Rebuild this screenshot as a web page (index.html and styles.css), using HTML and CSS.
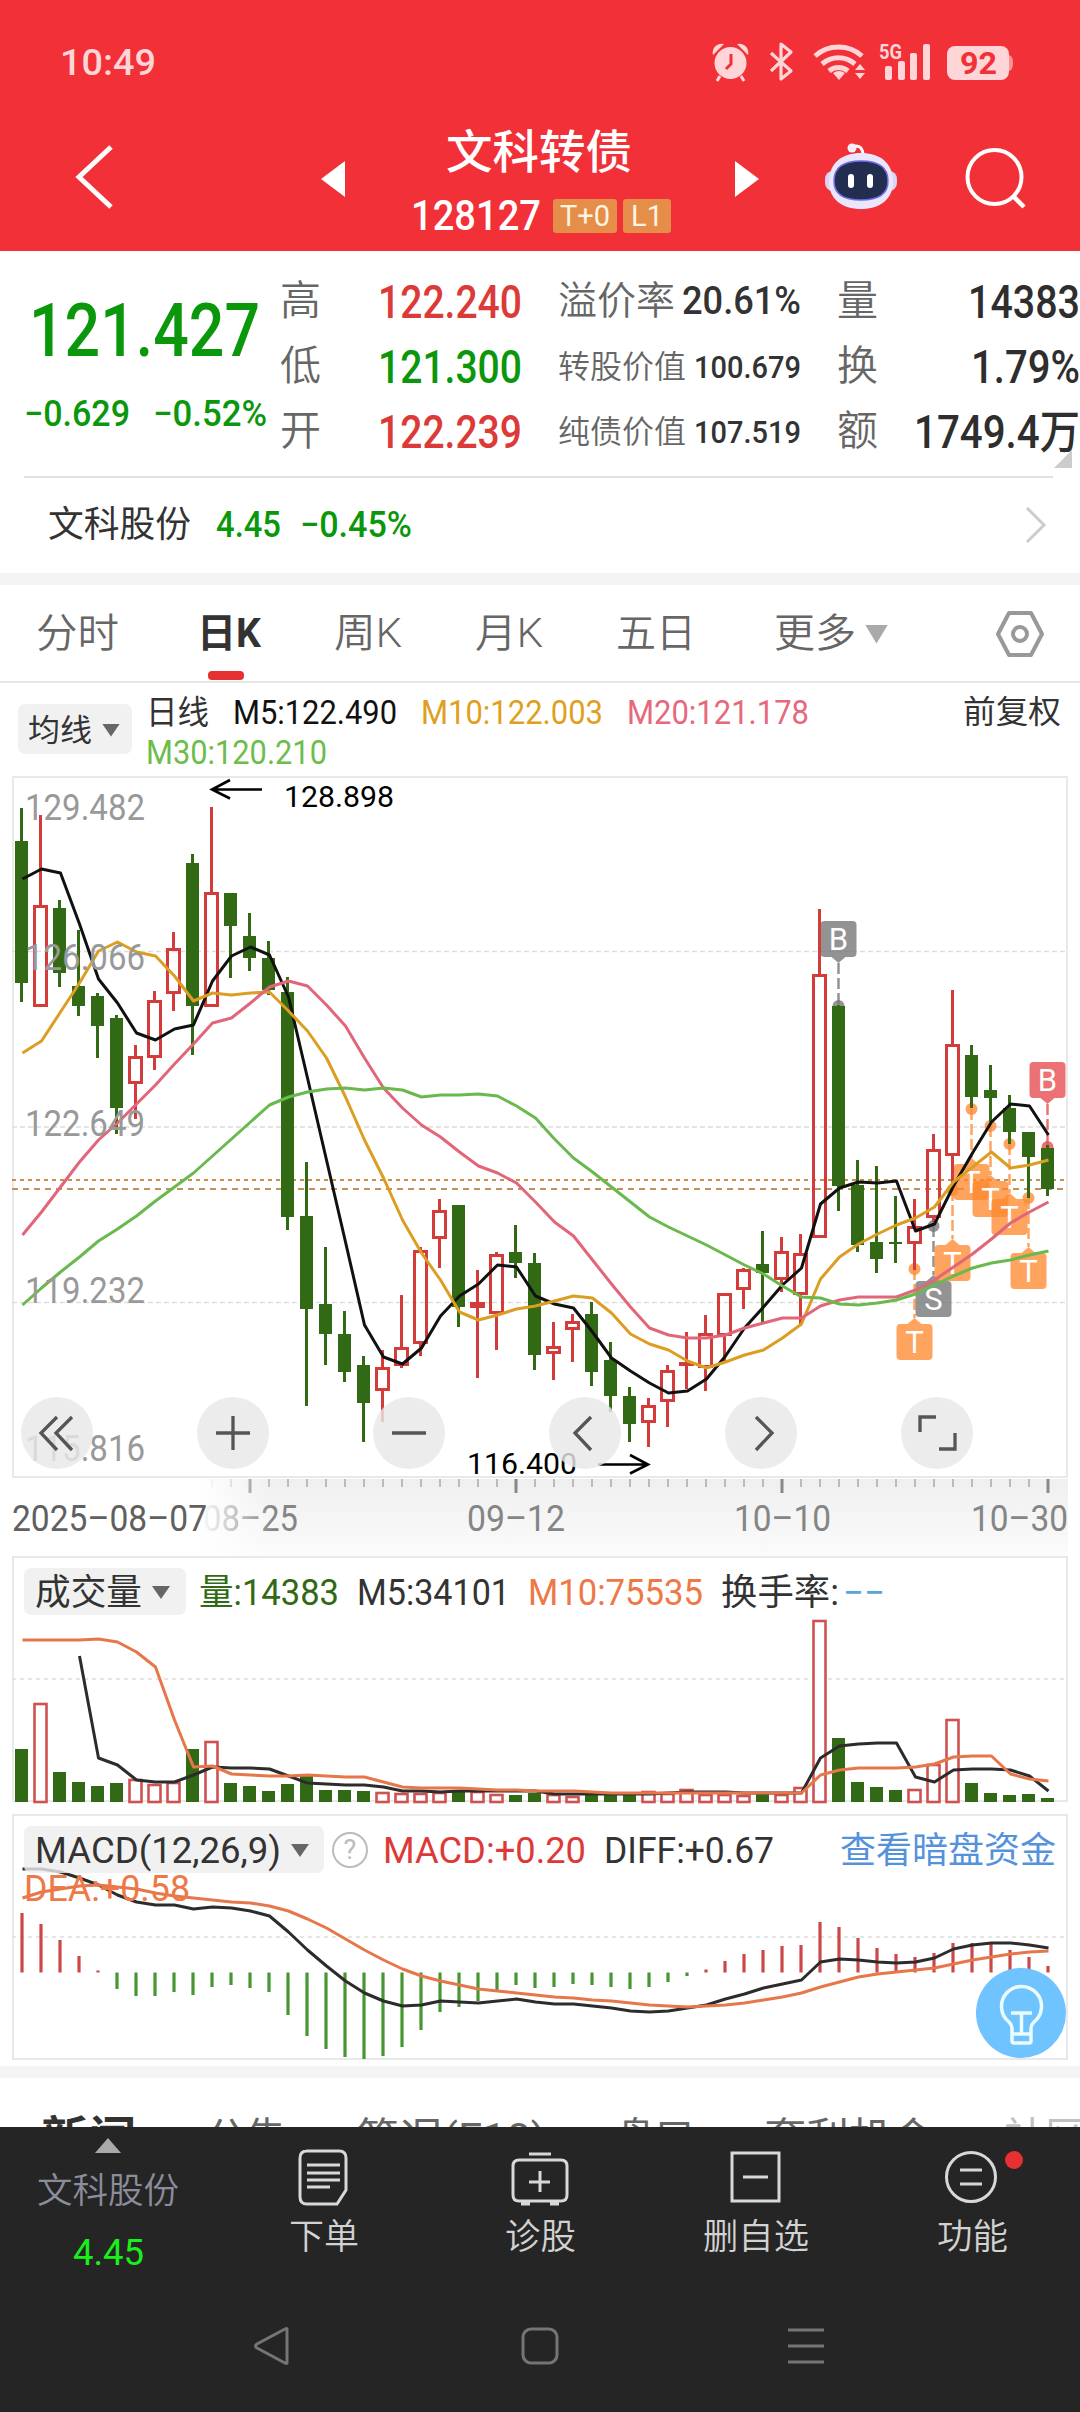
FILE: index.html
```html
<!DOCTYPE html>
<html lang="zh-CN">
<head>
    <meta charset="UTF-8">
    <meta name="viewport" content="width=device-width, initial-scale=1.0">
    <title>文科转债 128127</title>
    <link rel="stylesheet" href="styles.css">
</head>
<body>

    <header class="header">
        <div class="status">
            <span class="clock" data-w="96">10:49</span>
            <svg class="status-icons" width="310" height="50" viewBox="708 38 310 50">
                <g fill="#ffd5d7">
                    <circle cx="730.500" cy="63" r="16"/>
                    <path d="M713 55a9 9 0 0 1 11-11zM748 55a9 9 0 0 0-11-11z"/>
                    <path d="M720 76l-3 5M741 76l3 5" stroke="#ffd5d7" stroke-width="3"/>
                    <path d="M731 54v10l-5 5" fill="none" stroke="#f13037" stroke-width="3"/>
                    <path d="M771 53l20 18-10 8V44l10 8-20 19" fill="none" stroke="#ffd5d7" stroke-width="3.200" stroke-linejoin="round"/>
                    <path d="M815 56a35 35 0 0 1 47 0" fill="none" stroke="#ffd5d7" stroke-width="5"/>
                    <path d="M822 64a25 25 0 0 1 33 0" fill="none" stroke="#ffd5d7" stroke-width="5"/>
                    <path d="M829 71a15 15 0 0 1 19 0" fill="none" stroke="#ffd5d7" stroke-width="5"/>
                    <path d="M839 80l-6-7q6-4 12 0zM855 70l5-6 5 6zM855 73l5 6 5-6z"/>
                    <text x="879" y="59" class="net" textLength="23" lengthAdjust="spacingAndGlyphs">5G</text>
                    <rect x="885" y="66" width="7" height="14" rx="2"/>
                    <rect x="898" y="61" width="7" height="19" rx="2"/>
                    <rect x="910" y="53" width="7" height="27" rx="2"/>
                    <rect x="923" y="44" width="7" height="36" rx="2"/>
                    <rect x="947" y="46" width="62" height="34" rx="8"/>
                    <path d="M1009 55q4 1 4 8t-4 8z" opacity=".6"/>
                    <text x="960" y="74" class="battery" textLength="37" lengthAdjust="spacingAndGlyphs">92</text>
                </g>
            </svg>
        </div>
        <div class="toolbar">
            <svg class="back" width="44" height="70" viewBox="0 0 44 70"><path d="M38 5L6 35l32 30" fill="none" stroke="#fff" stroke-width="5"/></svg>
            <svg class="prev" width="24" height="36" viewBox="0 0 24 36"><path d="M24 0v36L0 18z" fill="#fff"/></svg>
            <div class="title">
                <h1><span data-w="186">文科转债</span></h1>
                <div class="code">
                    <span class="code-num" data-w="130">128127</span>
                    <span class="tag tag-t0">T+0</span>
                    <span class="tag tag-l1">L1</span>
                </div>
            </div>
            <svg class="next" width="24" height="36" viewBox="0 0 24 36"><path d="M0 0v36l24-18z" fill="#fff"/></svg>
            <svg class="robot" width="74" height="68" viewBox="823 142 74 68">
                <path d="M850 147q12-4 13 7" fill="none" stroke="#fff" stroke-width="3"/>
                <circle cx="852" cy="148" r="4.500" fill="#f3effc"/>
                <rect x="825" y="171" width="72" height="20" rx="8" fill="#dcd4f6"/>
                <path d="M829 182c0-20 14-29 32-29s32 9 32 29c0 17-13 27-32 27s-32-10-32-27z" fill="#ebe6fb"/>
                <path d="M834 181c0-14 9-20 27-20s27 6 27 20c0 13-9 19-27 19s-27-6-27-19z" fill="#222d50" stroke="#6f6ce8" stroke-width="1.500"/>
                <rect x="848" y="174" width="6" height="14" rx="3" fill="#fff"/>
                <rect x="867" y="174" width="6" height="14" rx="3" fill="#fff"/>
            </svg>
            <svg class="search" width="64" height="64" viewBox="963 146 64 64">
                <circle cx="994.500" cy="177" r="27" fill="none" stroke="#fff" stroke-width="4"/>
                <path d="M1013 196l11 11" stroke="#fff" stroke-width="4.500"/>
            </svg>
        </div>
    </header>

    <section class="quote">
        <div class="last down">
            <div class="price"><span data-w="231">121.427</span></div>
            <div class="change"><span data-w="106">−0.629</span><span data-w="114">−0.52%</span></div>
        </div>
        <dl class="stats">
            <dt>高</dt><dd class="up"><span data-w="144">122.240</span></dd>
            <dt class="mid">溢价率</dt><dd class="mid-v"><span data-w="119">20.61%</span></dd>
            <dt>量</dt><dd class="end"><span data-w="112">14383</span></dd>

            <dt>低</dt><dd class="down"><span data-w="144">121.300</span></dd>
            <dt class="small">转股价值</dt><dd class="small-v"><span data-w="107">100.679</span></dd>
            <dt>换</dt><dd class="end"><span data-w="109">1.79%</span></dd>

            <dt>开</dt><dd class="up"><span data-w="144">122.239</span></dd>
            <dt class="small">纯债价值</dt><dd class="small-v"><span data-w="107">107.519</span></dd>
            <dt>额</dt><dd class="end"><span data-w="166">1749.4万</span></dd>
        </dl>
        <i class="corner"></i>
    </section>

    <section class="related">
        <span class="related-name" data-w="143">文科股份</span>
        <span class="down" data-w="65">4.45</span>
        <span class="down" data-w="112">−0.45%</span>
        <svg width="24" height="40" viewBox="0 0 24 40"><path d="M3 3l17 17L3 37" fill="none" stroke="#ccc" stroke-width="3"/></svg>
    </section>

    <nav class="tabs">
        <span class="tab" data-w="83">分时</span>
        <span class="tab active"><span data-w="64">日K</span></span>
        <span class="tab" data-w="68">周K</span>
        <span class="tab" data-w="68">月K</span>
        <span class="tab" data-w="80">五日</span>
        <span data-w="82">更多</span>
        <i class="tri tri-light"></i>
        <svg width="50" height="48" viewBox="0 0 50 48"><path d="M14 3h22l11 21-11 21H14L3 24z" fill="none" stroke="#999" stroke-width="4" stroke-linejoin="round"/><circle cx="25" cy="24" r="7" fill="none" stroke="#999" stroke-width="4"/></svg>
    </nav>

    <div class="legend">
        <span class="picker"><span data-w="64">均线</span><i class="tri"></i></span>
        <div class="ma-list">
            <span class="dark" data-w="63">日线</span>
            <span class="ma5" data-w="164">M5:122.490</span>
            <span class="ma10" data-w="182">M10:122.003</span>
            <span class="ma20" data-w="182">M20:121.178</span>
            <span class="ma30" data-w="181">M30:120.210</span>
        </div>
        <span class="adjust" data-w="98">前复权</span>
    </div>

    <svg id="kline" class="chart" width="1080" height="780" viewBox="0 776 1080 780"></svg>

    <div class="panel">
        <svg id="volume" class="chart" width="1080" height="258" viewBox="0 1556 1080 258"></svg>
        <div class="panel-head">
            <span class="picker"><span data-w="107">成交量</span><i class="tri"></i></span>
            <span class="vol" data-w="140">量:14383</span>
            <span class="dark" data-w="153">M5:34101</span>
            <span class="orange" data-w="175">M10:75535</span>
            <span class="dark" data-w="118">换手率:</span>
            <span class="blank" data-w="42">−−</span>
        </div>
    </div>

    <div class="panel panel-macd">
        <svg id="macd" class="chart" width="1080" height="252" viewBox="0 1814 1080 252"></svg>
        <div class="panel-head">
            <span class="picker picker-macd"><span data-w="246">MACD(12,26,9)</span><i class="tri"></i></span>
            <span class="help">?</span>
            <span class="up" data-w="203">MACD:+0.20</span>
            <span class="dark" data-w="170">DIFF:+0.67</span>
            <a class="link" data-w="216">查看暗盘资金</a>
            <span class="dea" data-w="166">DEA:+0.58</span>
        </div>
        <svg class="tip" width="90" height="90" viewBox="0 0 90 90">
            <circle cx="45" cy="45" r="45" fill="#6fc3ff"/>
            <g fill="none" stroke="#eafcff" stroke-width="3.500">
                <path d="M36 73V60q0-3-3-6a20 20 0 1 1 25 0q-3 3-3 6v13q0 2-2 2H38q-2 0-2-2zM36 66h19"/>
                <path d="M35 45h21M45.500 45v21"/>
            </g>
        </svg>
    </div>

    <nav class="news">
        <span class="active" data-w="95">新闻</span>
        <span data-w="80">公告</span>
        <span data-w="190">简况(F10)</span>
        <span data-w="78">盘口</span>
        <span data-w="170">套利机会</span>
        <span class="faded" data-w="82">社区</span>
    </nav>

    <footer class="bottom">
        <div class="actions">
            <div class="action stock">
                <i class="tri-up"></i>
                <span class="stock-name" data-w="142">文科股份</span>
                <span class="stock-price" data-w="71">4.45</span>
            </div>
            <div class="action">
                <svg width="60" height="60" viewBox="0 0 60 60"><path d="M12 4h33q7 0 7 7v32L43 57H13q-7 0-7-7V11q0-7 7-7zM13 18h33M13 26h33M13 33h33M13 40h23"/></svg>
                <span data-w="70">下单</span>
            </div>
            <div class="action">
                <svg width="60" height="60" viewBox="0 0 60 60"><path d="M19 7h22M9 13h42q6 0 6 6v29q0 6-6 6H9q-6 0-6-6V19q0-6 6-6zM11 57h9M40 57h9M30 24v21M19 35h21"/></svg>
                <span data-w="71">诊股</span>
            </div>
            <div class="action">
                <svg width="60" height="60" viewBox="0 0 60 60"><path d="M6 6h47v48H6zM17 30h25"/></svg>
                <span data-w="106">删自选</span>
            </div>
            <div class="action">
                <svg width="60" height="60" viewBox="0 0 60 60"><circle cx="29" cy="30" r="24.500"/><path d="M18 23h22M18 37h22"/></svg>
                <i class="dot"></i>
                <span data-w="71">功能</span>
            </div>
        </div>
        <div class="system">
            <svg width="40" height="40" viewBox="0 0 40 40"><path d="M35 3v34q0 1-2 0L5 22q-3-2 0-4L33 3q2-1 2 0z"/></svg>
            <svg width="40" height="40" viewBox="0 0 40 40"><rect x="3" y="3" width="34" height="34" rx="8"/></svg>
            <svg width="40" height="40" viewBox="0 0 40 40"><path d="M2 4h36M2 20h36M2 36h36"/></svg>
        </div>
    </footer>

    <script src="chart.js"></script>
</body>
</html>
```
FILE: styles.css
```css
* { box-sizing: border-box; }
body {
    margin: 0;
    width: 1080px;
    height: 2412px;
    overflow: hidden;
    background: #fff;
    color: #333;
    font-family: Roboto, "Noto Sans CJK SC", sans-serif;
    line-height: 1;
}
svg { display: block; flex: none; }
i { flex: none; }
[data-w] { display: inline-block; white-space: nowrap; transform-origin: 0 50%; flex: none; }

.up { color: #dc3a38; }
.down { color: #0b970b; }
.dark { color: #333; }
.orange { color: #ee7846; }

/* header */
.header { height: 251px; background: #f13037; color: #fff; }
.status { height: 124px; display: flex; justify-content: space-between; padding: 38px 62px 0 60px; }
.clock { font-size: 37px; line-height: 49px; font-weight: 500; color: #ffd5d7; }
.net { font-size: 20px; font-weight: 700; }
.battery { font-size: 31px; font-weight: 700; fill: #f13037; }
.toolbar { display: flex; height: 127px; padding-left: 73px; }
.back { margin-top: 18px; }
.prev { margin: 37px 0 0 204px; }
.next { margin: 37px 0 0 60px; }
.robot { margin: 18px 0 0 64px; }
.search { margin: 22px 0 0 66px; }
.title { width: 330px; flex: none; }
h1 { margin: 3px 0 0 59px; font-size: 46px; line-height: 50px; font-weight: 500; padding-left: 42px; }
.code { display: flex; align-items: center; height: 40px; margin-top: 19px; padding-left: 66px; }
.code-num { font-size: 42px; font-weight: 500; }
.tag { height: 34px; line-height: 35px; margin-left: 12px; background: #e48e4a; border-radius: 3px; font-size: 29px; color: #fff3e2; text-align: center; }
.tag-t0 { width: 64px; }
.tag-l1 { width: 48px; margin-left: 6px; }

/* quote */
.quote { display: flex; height: 225px; position: relative; }
.last { width: 280px; padding: 42px 0 0 29px; flex: none; }
.price { font-size: 75px; font-weight: 500; height: 76px; }
.change { display: flex; gap: 23px; margin: 27px 0 0 -5px; font-size: 36px; font-weight: 500; }
.stats {
    margin: 18px 0 0;
    width: 800px;
    display: grid;
    grid-template-columns: 98px 180px 124px 155px 42px 1fr;
    grid-auto-rows: 65px;
    align-items: center;
    font-size: 41px;
}
.stats dt { color: #666; font-weight: 350; white-space: nowrap; }
.stats dd { margin: 0; font-size: 46px; font-weight: 500; }
.stats .mid, .stats .mid-v { font-size: 39px; }
.stats .small { font-size: 32px; }
.stats .small-v { font-size: 32px; padding-left: 12px; }
.stats .end { text-align: right; color: #2e2e2e; }
.corner { position: absolute; right: 8px; bottom: 8px; width: 18px; height: 18px; background: #ccc; clip-path: polygon(100% 0, 100% 100%, 0 100%); }

.related {
    display: flex;
    align-items: center;
    height: 109px;
    padding: 0 32px 0 48px;
    border-bottom: 12px solid #f4f4f4;
    font-size: 36px;
    font-weight: 500;
    background: linear-gradient(#e2e2e2, #e2e2e2) 24px 0 / 1029px 2px no-repeat;
}
.related-name { font-weight: 400; margin-right: 25px; }
.related .down { margin-right: 19px; }
.related svg { margin-left: auto; }

/* period tabs */
.tabs { display: flex; align-items: center; height: 98px; padding: 2px 0 0 36px; border-bottom: 2px solid #e6e6e6; font-size: 40px; font-weight: 350; color: #666; }
.tab { margin-right: 73px; }
.tab:first-child, .tab:nth-child(5) { margin-right: 78px; }
.tabs .active { position: relative; font-weight: 700; color: #333; }
.tabs .active::after { content: ""; position: absolute; left: 11px; top: 57px; width: 36px; height: 9px; border-radius: 4px; background: #e73031; }
.tabs svg { margin-left: 107px; }
.tri { width: 18px; height: 13px; background: #666; clip-path: polygon(0 0, 100% 0, 50% 100%); margin-left: 10px; }
.tri-light { width: 23px; height: 19px; background: #aaa; margin-left: 9px; }

/* moving average legend */
.legend { display: flex; height: 93px; padding-left: 18px; }
.picker { display: flex; align-items: center; height: 50px; padding: 2px 12px 0 10px; background: #f1f1f1; border-radius: 7px; color: #333; }
.legend .picker { margin-top: 21px; width: 114px; font-size: 31px; }
.ma-list { display: flex; flex-wrap: wrap; column-gap: 24px; width: 770px; margin: 10px 0 0 14px; font-size: 33px; height: 80px; align-content: flex-start; line-height: 40px; font-weight: 450; }
.ma-list .dark { font-weight: 400; }
.ma5 { color: #111; }
.ma10 { color: #dfa021; }
.ma20 { color: #e7687c; }
.ma30 { color: #6cbd4c; }
.adjust { margin: 9px 0 0 47px; font-size: 32px; line-height: 40px; font-weight: 400; }

/* chart text */
.axis { font-size: 37px; fill: #999; }
.date { font-size: 37px; fill: #858585; }
.date-first { fill: #606060; }
.peak { font-size: 30px; fill: #000; }
.flag { font-size: 31px; fill: #fff; text-anchor: middle; }

/* indicator panels */
.panel { display: grid; height: 258px; }
.panel > * { grid-area: 1 / 1; }
.panel-macd { height: 264px; border-bottom: 12px solid #f4f4f4; }
.panel-head { display: flex; align-items: flex-start; flex-wrap: wrap; height: 100px; padding: 12px 0 0 24px; font-size: 36px; line-height: 50px; z-index: 1; }
.panel .picker { height: 47px; width: 162px; padding-left: 11px; margin-right: 13px; }
.panel-head > span { margin-right: 18px; }
.vol { color: #326915; }
.blank { color: #56a6dc; margin-left: -14px; }
.panel .picker-macd { width: 300px; margin-right: 8px; background: rgba(238, 238, 238, .8); }
.panel-head .help { width: 36px; height: 36px; margin: 6px 15px 0 0; border: 2px solid #bbb; border-radius: 50%; color: #bbb; font-size: 27px; line-height: 32px; text-align: center; }
.link { color: #5592dc; margin-left: 48px; }
.panel-head .dea { color: #ee7846; margin-top: -12px; }
.tip { align-self: end; margin: 0 0 8px 976px; z-index: 2; }

/* news tabs */
.news { display: flex; height: 49px; padding: 37px 0 0 41px; overflow: hidden; font-size: 41px; line-height: 46px; color: #666; }
.news span { margin-right: 70px; }
.news .active { font-size: 46px; font-weight: 700; color: #333; }
.news .faded { opacity: .4; margin: 0; }

/* bottom bar */
.bottom { height: 285px; background: #252525; color: #d2d2d2; }
.actions { display: grid; grid-template-columns: repeat(5, 1fr); height: 183px; font-size: 35px; font-weight: 350; }
.action { display: flex; flex-direction: column; align-items: center; padding-top: 20px; position: relative; }
.action svg, .system svg { fill: none; stroke: #d8d8d8; stroke-width: 3; }
.action > span { margin-top: 13px; }
.action.stock { padding-top: 11px; }
.tri-up { width: 26px; height: 15px; background: #aaa; clip-path: polygon(50% 0, 100% 100%, 0 100%); }
.action .stock-name { margin-top: 21px; color: #8b8d9b; }
.action .stock-price { margin-top: 25px; color: #1bf01b; font-size: 37px; font-weight: 400; }
.dot { position: absolute; left: 141px; top: 24px; width: 18px; height: 18px; border-radius: 50%; background: #e73031; }
.system { display: flex; padding: 16px 0 0 252px; }
.system svg { stroke: #757575; margin-right: 228px; }
.system svg:nth-child(2) { margin-right: 226px; }
```
FILE: chart.js
```javascript
// x of every trading day
const X = i => 21.5 + i * 19;
const RED = '#d43c3c', GREEN = '#326915';

// [up?, high, body top, body bottom, low]
const candles = [
    [0,808,841,983,1002],[1,815,905,1007,1007],[0,900,908,973,987],[0,930,986,1006,1016],[0,993,996,1026,1058],
    [0,1015,1018,1108,1134],[1,1045,1056,1084,1119],[1,991,1000,1058,1070],[1,932,948,994,1011],[0,854,863,1006,1055],
    [1,807,892,1007,1007],[0,893,893,926,978],[0,913,936,958,971],[0,941,958,990,995],[0,977,992,1217,1230],
    [0,1162,1216,1309,1406],[0,1247,1304,1334,1365],[0,1311,1334,1372,1382],[0,1356,1365,1403,1442],[1,1350,1367,1391,1422],
    [1,1295,1347,1366,1368],[1,1247,1250,1344,1356],[1,1199,1210,1239,1268],[0,1205,1205,1307,1327],[1,1270,1302,1308,1378],
    [1,1252,1254,1314,1350],[0,1225,1252,1263,1278],[0,1253,1263,1355,1370],[1,1322,1346,1354,1380],[1,1314,1321,1330,1362],
    [0,1302,1314,1372,1386],[0,1342,1360,1396,1412],[0,1387,1396,1424,1442],[1,1398,1405,1423,1447],[1,1365,1370,1402,1427],
    [1,1332,1362,1366,1389],[1,1315,1333,1368,1391],[1,1293,1293,1336,1361],[1,1268,1269,1290,1309],[0,1231,1264,1273,1322],
    [1,1237,1251,1280,1292],[1,1234,1253,1295,1326],[1,909,974,1238,1238],[0,1005,1006,1186,1211],[0,1160,1185,1245,1252],
    [0,1166,1242,1259,1273],[0,1196,1242,1244,1263],[1,1199,1226,1244,1270],[1,1134,1149,1218,1222],[1,990,1044,1156,1187],
    [0,1045,1055,1097,1108],[0,1065,1090,1098,1122],[0,1095,1108,1132,1144],[0,1132,1132,1157,1198],[0,1145,1148,1189,1196]
];
const ma5 = [879,869,873,924,979,1003,1033,1040,1029,1025,981,956,947,955,997,1078,1160,1242,1325,1357,1364,1348,1316,1296,1284,1265,1267,1296,1304,1308,1332,1358,1371,1383,1393,1391,1379,1356,1328,1307,1285,1268,1204,1188,1182,1183,1181,1231,1224,1186,1153,1122,1104,1106,1135];
const ma10 = [1053,1041,1012,983,951,942,952,956,976,1001,993,995,993,992,1011,1031,1058,1097,1140,1178,1220,1253,1280,1312,1320,1315,1309,1306,1301,1296,1298,1313,1334,1344,1350,1361,1368,1362,1355,1350,1338,1324,1279,1257,1244,1234,1225,1218,1207,1182,1167,1152,1168,1165,1160];
const ma20 = [1235,1212,1187,1162,1140,1123,1104,1085,1064,1044,1023,1018,1003,987,981,986,1005,1026,1058,1088,1108,1125,1137,1152,1166,1173,1183,1202,1222,1236,1260,1284,1307,1328,1335,1338,1338,1335,1328,1323,1318,1318,1306,1300,1297,1297,1297,1290,1280,1267,1254,1239,1223,1212,1202];
const ma30 = [1305,1288,1272,1257,1241,1229,1216,1201,1187,1173,1156,1139,1122,1105,1097,1092,1089,1088,1090,1088,1090,1097,1095,1095,1094,1096,1106,1118,1139,1158,1172,1187,1202,1217,1227,1236,1245,1255,1265,1274,1286,1297,1298,1304,1305,1303,1300,1294,1285,1276,1268,1263,1260,1255,1251];

const volumes = [1749,1703,1772,1782,1786,1783,1779,1784,1782,1749,1741,1783,1786,1791,1784,1776,1790,1790,1791,1792,1793,1793,1792,1790,1791,1794,1795,1793,1794,1796,1795,1795,1795,1791,1793,1789,1794,1794,1795,1794,1794,1787,1620,1738,1782,1787,1790,1789,1764,1719,1783,1793,1795,1794,1798];
const vol5 = [null,null,null,1656,1758,1765,1780,1782,1782,1775,1767,1768,1768,1769,1776,1783,1784,1785,1785,1787,1791,1791,1792,1791,1791,1791,1791,1791,1794,1794,1794,1794,1794,1794,1793,1792,1792,1792,1793,1793,1793,1793,1758,1746,1744,1743,1743,1777,1782,1770,1769,1769,1770,1776,1791];
const vol10 = [1640,1640,1640,1640,1639,1642,1652,1667,1720,1767,1766,1774,1775,1776,1776,1775,1776,1777,1777,1782,1787,1788,1788,1788,1789,1790,1790,1791,1791,1791,1792,1793,1793,1793,1793,1793,1793,1793,1793,1793,1793,1793,1775,1770,1768,1768,1768,1767,1764,1757,1756,1756,1774,1779,1781];

const bars = [1913,1924,1940,1956,1970.5,1989,1996,1996,1992,1995,1987,1985,1988,1992,2015,2036,2049,2057,2059,2056,2047,2030,2012,2007,2001,1990,1985,1988,1987,1984,1985,1987,1989,1987,1982,1976,1969.5,1961,1954,1950,1946,1945,1922,1927,1938,1948,1954,1957,1953,1943,1943,1944,1950,1957,1966];
const diff = [1869,1869,1872,1878,1885,1895,1902,1905,1905,1909,1907,1908,1911,1916,1932,1950,1966,1981,1993,2001,2006,2005,2001,2002,2003,2001,1999,2002,2004,2004,2006,2008,2011,2012,2011,2008,2005,1999,1994,1988,1984,1980,1962,1959,1960,1962,1963,1962,1958,1949,1945,1943,1943,1945,1948];
const dea = [1898,1892,1889,1886,1885,1887,1889,1893,1896,1898,1900,1902,1903,1906,1911,1919,1928,1939,1950,1960,1969,1976,1981,1985,1989,1991,1993,1995,1997,1998,2000,2001,2003,2005,2006,2007,2006,2005,2003,2000,1997,1993,1987,1982,1977,1974,1972,1970,1968,1964,1960,1957,1954,1952,1951];

function line(ys, color, w = 3) {
    const pts = ys.map((y, i) => y === null ? '' : `${X(i) + 1},${y}`).join(' ');
    return `<polyline points="${pts}" fill="none" stroke="${color}" stroke-width="${w}" stroke-linejoin="round"/>`;
}
function hline(y, color, dash, w = 1.5) {
    return `<path d="M12 ${y}H1066" stroke="${color}" stroke-width="${w}" stroke-dasharray="${dash}"/>`;
}
function frame(y, h) {
    return `<rect x="13" y="${y}" width="1054" height="${h}" fill="none" stroke="#e9e9e9" stroke-width="2"/>`;
}
function text(x, y, w, cls, str) {
    return `<text x="${x}" y="${y}" class="${cls}" textLength="${w}" lengthAdjust="spacingAndGlyphs">${str}</text>`;
}
// trade mark: letter in a box, dashed leader and dot on the candle
function mark(i, letter, top, dot, color) {
    const x = X(i), below = top > dot;
    const tip = below ? `M${x - 7} ${top}l7-6 7 6z` : `M${x - 7} ${top + 36}l7 6 7-6z`;
    const from = below ? dot : top + 42, to = below ? top - 6 : dot;
    return `<g fill="${color}"><path d="M${x} ${from}V${to}" stroke="${color}" stroke-width="2.5" stroke-dasharray="11 4"/>
        <circle cx="${x}" cy="${dot}" r="6"/><rect x="${x - 18}" y="${top}" width="36" height="36" rx="4"/><path d="${tip}"/></g>
        <text x="${x}" y="${top + 29}" class="flag">${letter}</text>`;
}

function drawKline() {
    let s = frame(777, 700);
    s += [951.5, 1127, 1302.5].map(y => hline(y, '#ddd', '5 3')).join('');
    s += hline(1180, '#c9904c', '4 4', 2) + hline(1189, '#c2925c', '6 5', 2);

    const grey = 'rgba(120,120,120,.8)', orange = 'rgba(255,136,45,.76)';
    s += mark(43, 'B', 921, 1006, grey) + mark(54, 'B', 1062, 1147, 'rgba(232,82,85,.82)');
    s += mark(47, 'T', 1324, 1269, orange) + mark(48, 'S', 1281, 1226, grey) + mark(49, 'T', 1245, 1190, orange);
    s += mark(50, 'T', 1164, 1109, orange) + mark(51, 'T', 1181, 1126, orange);
    s += mark(52, 'T', 1199, 1144, orange) + mark(53, 'T', 1253, 1198, orange);

    candles.forEach(([up, h, t, b, l], i) => {
        const x = X(i);
        if (up) {
            s += `<path d="M${x} ${h}V${t}M${x} ${b}V${l}" stroke="${RED}" stroke-width="3"/>`;
            s += `<rect x="${x - 6}" y="${t + 1.5}" width="12" height="${Math.max(b - t - 3, 1)}" fill="none" stroke="${RED}" stroke-width="3"/>`;
        } else {
            s += `<path d="M${x} ${h}V${l}" stroke="${GREEN}" stroke-width="3"/><rect x="${x - 6.5}" y="${t}" width="13" height="${b - t}" fill="${GREEN}"/>`;
        }
    });
    s += line(ma5, '#111') + line(ma10, '#dc9e22') + line(ma20, '#e2667a') + line(ma30, '#69b94d');

    [['129.482', 820], ['126.066', 970], ['122.649', 1136], ['119.232', 1303], ['115.816', 1461]]
        .forEach(([p, y]) => s += text(25, y, 120, 'axis', p));

    s += text(284, 807, 110, 'peak', '128.898') + text(467, 1474, 110, 'peak', '116.400');
    s += '<path d="M262 789.500H212M230 780l-18 9.500 18 9M598 1464.500h50M630 1455l18 9.500-18 9" fill="none" stroke="#000" stroke-width="2.6"/>';

    // floating chart controls
    const icons = [
        'M57 1417l-16 16 16 17M72 1417l-16 16 16 17', 'M216 1433h34M233 1416v34', 'M392 1433h34',
        'M591 1417l-16 16 16 17', 'M756 1417l16 16-16 17', 'M920 1432v-15h16M939 1449h16v-16'
    ];
    icons.forEach((d, k) => s += `<circle cx="${57 + k * 176}" cy="1433" r="36" fill="rgba(232,232,232,.82)"/><path d="${d}" fill="none" stroke="#555" stroke-width="3.3"/>`);

    // date axis
    s += `<defs><linearGradient id="g" x2="0" y2="1"><stop stop-color="#efefef"/><stop offset="1" stop-color="#fbfbfb"/></linearGradient>
        <linearGradient id="h"><stop stop-color="#fff"/><stop offset="1" stop-color="#fff" stop-opacity="0"/></linearGradient></defs>
        <rect x="12" y="1479" width="1056" height="77" fill="url(#g)"/>`;
    for (let i = 10; i < 55; i++) {
        const major = (i - 12) % 14 === 0;
        s += `<path d="M${X(i) + .5} 1479v${major ? 14 : 8}" stroke="${major ? '#888' : '#bbb'}" stroke-width="${major ? 3 : 2}"/>`;
    }
    s += text(203, 1531, 95, 'date', '08–25');
    s += '<rect x="10" y="1479" width="190" height="77" fill="#fff"/><rect x="199" y="1479" width="75" height="77" fill="url(#h)"/>';
    s += text(12, 1531, 195, 'date date-first', '2025–08–07');
    s += text(467, 1531, 98, 'date', '09–12') + text(734, 1531, 97, 'date', '10–10') + text(971, 1531, 97, 'date', '10–30');
    document.getElementById('kline').innerHTML = s;
}

function drawVolume() {
    let s = frame(1557, 244) + hline(1679, '#ddd', '4 4');
    volumes.forEach((y, i) => {
        const x = X(i);
        s += candles[i][0]
            ? `<rect x="${x - 6}" y="${y + 1}" width="12" height="${1801 - y}" fill="#fff" stroke="#cf5252" stroke-width="2.6"/>`
            : `<rect x="${x - 6.5}" y="${y}" width="13" height="${1802 - y}" fill="${GREEN}"/>`;
    });
    s += line(vol5, '#2c2c2c') + line(vol10, '#e6774a');
    document.getElementById('volume').innerHTML = s;
}

function drawMacd() {
    let s = frame(1815, 244) + hline(1937, '#ddd', '4 4');
    bars.forEach((y, i) => {
        s += `<path d="M${X(i) + .5} 1972.500V${y}" stroke="${y < 1972 ? '#cb4848' : '#469632'}" stroke-width="3.2"/>`;
    });
    s += line(diff, '#2c2c2c') + line(dea, '#e6774a');
    document.getElementById('macd').innerHTML = s;
}

// squeeze labels to their column width
function fitLabels() {
    document.querySelectorAll('[data-w]').forEach(el => {
        const w = +el.dataset.w, natural = el.getBoundingClientRect().width;
        const gap = parseFloat(getComputedStyle(el).marginRight) || 0;
        el.style.transform = `scaleX(${w / natural})`;
        el.style.marginRight = `${w - natural + gap}px`;
    });
}

drawKline();
drawVolume();
drawMacd();
fitLabels();
```
